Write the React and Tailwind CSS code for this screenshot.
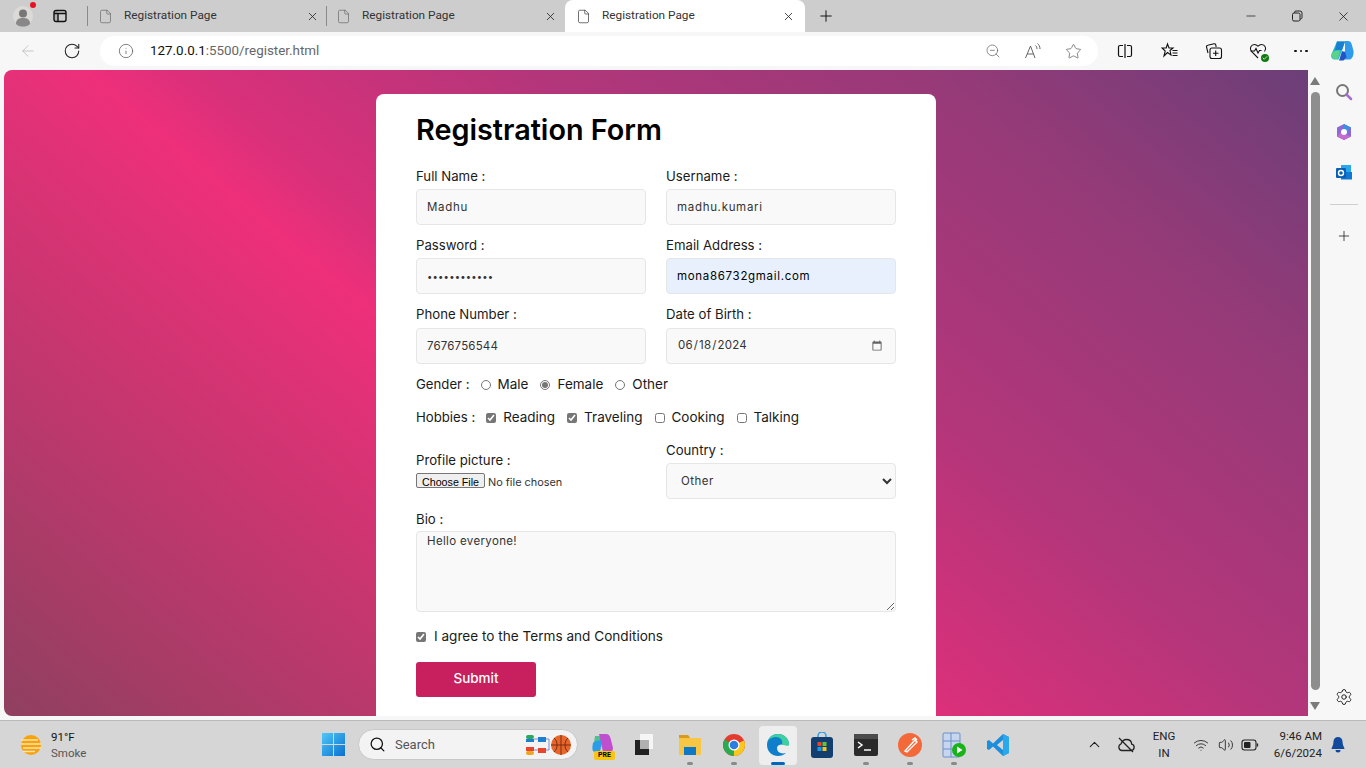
import React from "react";
import { ArrowLeft, RotateCw, Info, ZoomOut, Star, X, Plus, Minus, Search, Settings, ChevronUp, Wifi, Volume2, Bell, File, Check } from "lucide-react";

function Tab({ active, last }) {
  return (
    <div className={active ? "h-[32px] w-[240px] flex items-center bg-white rounded-t-[8px] pl-[11px] pr-[10px]" : "h-[32px] w-[239px] flex items-center pl-[10px] pr-[8px]"}>
      <File size={15} strokeWidth={1.1} className={active ? "text-[#333] shrink-0" : "text-[#666] shrink-0"} />
      <span className="ml-[11px] text-[11.8px] text-[#333] flex-1">Registration Page</span>
      <X size={13} strokeWidth={1.5} className="text-[#222] shrink-0" />
    </div>
  );
}

function TabBar() {
  return (
    <div className="h-[32px] bg-[#cdcdcd] flex items-center">
      <div className="w-[46px] h-full flex items-center justify-center pl-[0px]">
        <div className="relative w-[18px] h-[18px] mt-[1px]">
          <svg width="20" height="22" viewBox="0 0 20 22" className="ml-[-1px] mt-[-3px]">
            <circle cx="10" cy="11" r="10" fill="#dcdad6" />
            <circle cx="10" cy="8.5" r="4" fill="#777" />
            <path d="M3 19c0-5 3-6 7-6s7 1 7 6c-2 2-4 2.5-7 2.5S5 21 3 19z" fill="#888" />
          </svg>
          <span className="absolute right-[-4px] top-[-6px] w-[6px] h-[6px] rounded-full bg-[#e81123]" />
        </div>
      </div>
      <div className="w-[28px] flex justify-center">
        <svg width="14" height="14" viewBox="0 0 14 14" fill="none" stroke="#111" strokeWidth="1.4">
          <rect x="1" y="1.5" width="12" height="11" rx="2" />
          <path d="M1 4.5h12M5 4.5v8" />
          <rect x="1" y="1.5" width="4" height="11" fill="#111" stroke="none" opacity=".15" />
        </svg>
      </div>
      <div className="w-[13px]" />
      <div className="w-px h-[20px] bg-[#8a8a8a]" />
      <Tab />
      <div className="w-px h-[20px] bg-[#8a8a8a] ml-[-1px]" />
      <div className="ml-[-1px]"><Tab /></div>
      <Tab active />
      <div className="w-[42px] flex justify-center">
        <Plus size={18} strokeWidth={1.3} className="text-[#111]" />
      </div>
      <div className="flex-1" />
      <div className="flex items-center text-[#111]">
        <div className="w-[46px] flex justify-center"><Minus size={14} strokeWidth={1.2} /></div>
        <div className="w-[46px] flex justify-center">
          <svg width="12" height="12" viewBox="0 0 12 12" fill="none" stroke="#222" strokeWidth="1">
            <rect x="1.5" y="3" width="7.5" height="8" rx="1.5" />
            <path d="M3.5 3V2.5A1.5 1.5 0 0 1 5 1h4a2 2 0 0 1 2 2v4.5A1.5 1.5 0 0 1 9 9" />
          </svg>
        </div>
        <div className="w-[46px] flex justify-center pl-[1px]"><X size={15} strokeWidth={1.2} /></div>
      </div>
    </div>
  );
}

function CopilotLogo() {
  return (
    <svg width="24" height="24" viewBox="0 0 24 24">
      <path d="M7 2.5h8l-3 9-3.5 9H5C2 20.5 0.5 18 1.500 15z" fill="#22b8c8" />
      <path d="M7 2.500h8L12 11H5z" fill="#1a7fd0" />
      <path d="M15 2h3c2 0 3 1 3.800 3.500L23.500 12c.5 3-1 8.500-4 8.500H12l3-9z" fill="#2f9bec" />
      <path d="M9 21.500 12 12l3 1 1.500 5-3 3.500z" fill="#2453c9" />
      <path d="M2 14c2-2 5-3 8-2l-2 8H5c-2 0-3.500-2-3-6z" fill="#5bd28a" />
    </svg>
  );
}

function Toolbar() {
  return (
    <div className="h-[38px] bg-[#f7f7f7] flex items-center">
      <div className="w-[56px] flex justify-center"><ArrowLeft size={18} strokeWidth={1} className="text-[#b5b5b5]" /></div>
      <div className="w-[32px] flex justify-center"><RotateCw size={18} strokeWidth={1.4} className="text-[#222]" /></div>
      <div className="w-[12px]" />
      <div className="w-[998px] h-[30px] rounded-full bg-white flex items-center">
        <Info size={16} strokeWidth={1.1} className="ml-[18px] text-[#555]" />
        <div className="ml-[16px] text-[13.4px] flex-1">
          <span className="text-[#111]">127.0.0.1</span><span className="text-[#666]">:5500/register.html</span>
        </div>
        <div className="w-[40px] flex justify-center"><ZoomOut size={16} strokeWidth={1.1} className="text-[#666]" /></div>
        <div className="w-[40px] flex justify-center">
          <svg width="18" height="18" viewBox="0 0 18 18" fill="none" stroke="#666" strokeWidth="1">
            <path d="M1.500 16 6.500 4l4.500 12M3.200 12h6.500M11.500 3.500c1 .8 1.500 2 1.500 3.500M13.500 1.500c1.500 1.300 2.500 3 2.500 5.500" />
          </svg>
        </div>
        <div className="w-[40px] flex justify-center"><Star size={17} strokeWidth={1.1} className="text-[#666]" /></div>
        <div className="w-[5px]" />
      </div>
      <div className="w-[4px]" />
      <div className="w-[46px] flex justify-center">
        <svg width="16" height="16" viewBox="0 0 16 16" fill="none" stroke="#111" strokeWidth="1.2">
          <path d="M6 2.500H3A1.500 1.500 0 0 0 1.500 4v8A1.500 1.500 0 0 0 3 13.500h3M10 2.500h3A1.500 1.500 0 0 1 14.500 4v8a1.500 1.500 0 0 1-1.500 1.500h-3M8 1v14" />
        </svg>
      </div>
      <div className="w-[44px] flex justify-center">
        <svg width="18" height="18" viewBox="0 0 18 18" fill="none" stroke="#111" strokeWidth="1.1">
          <path d="M6.500 2 8 6h4L9 8.500l1 4.500-3.500-2.500L3 14l1.200-5L1 6h4.200zM11.500 8.500H16.500M11.500 11H16.500M11.500 13.500H16.500" />
        </svg>
      </div>
      <div className="w-[44px] flex justify-center">
        <svg width="18" height="18" viewBox="0 0 18 18" fill="none" stroke="#111" strokeWidth="1.1">
          <path d="M3 11 1.500 5A1.500 1.500 0 0 1 2.800 3.200L9 1.800a1.500 1.500 0 0 1 1.800 1.200l.3 2" />
          <rect x="5" y="6" width="11.500" height="10.500" rx="2" />
          <path d="M10.700 8.500v5.500M8 11.200h5.500" />
        </svg>
      </div>
      <div className="w-[44px] flex justify-center">
        <div className="relative w-[18px] h-[18px]">
          <svg width="18" height="18" viewBox="0 0 18 18" fill="none" stroke="#111" strokeWidth="1.1">
            <path d="M9 16 2.500 9.500C0 6.500 2 2.500 5.500 2.500 7 2.500 8 3.200 9 4.200c1-1 2-1.700 3.500-1.700C16 2.500 18 6.500 15.500 9.500" />
            <path d="M1.500 9h4l1.500-2.500 2 4.500 1.500-2.500h2" />
          </svg>
          <span className="absolute right-[-2px] bottom-[-2px] w-[8px] h-[8px] rounded-full bg-[#107c10] flex items-center justify-center">
            <Check size={6} strokeWidth={3} className="text-white" />
          </span>
        </div>
      </div>
      <div className="w-[42px] flex justify-center gap-[3px]">
        <span className="w-[2.500px] h-[2.500px] rounded-full bg-[#111]" />
        <span className="w-[2.500px] h-[2.500px] rounded-full bg-[#111]" />
        <span className="w-[2.500px] h-[2.500px] rounded-full bg-[#111]" />
      </div>
      <div className="w-[40px] flex justify-center"><CopilotLogo /></div>
    </div>
  );
}

const inputCls = "w-full h-[36px] rounded-[4px] border border-[#e6e6e6] bg-[#f9f9f9] px-[10px] text-[11.5px] text-[#333] tracking-[0.06em] outline-none";
const numCls = "w-full h-[36px] rounded-[4px] border border-[#e6e6e6] bg-[#f9f9f9] px-[10px] text-[11.5px] text-[#333] tracking-[0.015em] outline-none";

function Field({ label, children, className = "" }) {
  return (
    <div className={"flex flex-col gap-[2px] " + className}>
      <label className="h-[21px] leading-[21px] text-[13.2px] text-[#1a1a1a]">{label}</label>
      {children}
    </div>
  );
}

function Choice({ type, label, checked, gap = "ml-[7px]" }) {
  return (
    <label className="flex items-center">
      <input type={type} name={type === "radio" ? "gender" : undefined} defaultChecked={checked} className="w-[10px] h-[10px] m-0 accent-[#767676]" />
      <span className={gap + " text-[13.5px] text-[#1a1a1a]"}>{label}</span>
    </label>
  );
}

function Form() {
  return (
    <div className="w-[560px] h-[640px] mt-[24px] shrink-0 bg-white rounded-t-[8px] px-[40px] pt-[17px] font-['Inter',sans-serif]">
      <h1 className="h-[38px] leading-[38px] text-[28.8px] font-semibold text-black">Registration Form</h1>
      <div className="grid grid-cols-2 gap-x-[20px] mt-[17px]">
        <Field label="Full Name :" className="mb-[10px]"><input className={inputCls} defaultValue="Madhu" /></Field>
        <Field label="Username :" className="mb-[10px]"><input className={inputCls} defaultValue="madhu.kumari" /></Field>
        <Field label="Password :" className="mb-[10px]"><input type="password" className={inputCls + " !text-[9.5px] !tracking-[0.02em]"} defaultValue="madhu1234567" /></Field>
        <Field label="Email Address :" className="mb-[10px]"><input className={inputCls + " !bg-[#e8f0fe] !text-black"} defaultValue="mona86732gmail.com" /></Field>
        <Field label="Phone Number :" className="gap-[3px]"><input className={numCls} defaultValue="7676756544" /></Field>
        <Field label="Date of Birth :" className="gap-[3px]"><input type="date" className={numCls + " [&::-webkit-calendar-picker-indicator]:opacity-60 [&::-webkit-calendar-picker-indicator]:w-[12px] [&::-webkit-calendar-picker-indicator]:h-[12px]"} defaultValue="2024-06-18" /></Field>
      </div>
      <div className="flex items-center h-[21px] mt-[10px] text-[13.2px] text-[#1a1a1a]">
        <span className="mr-[11px]">Gender :</span>
        <Choice type="radio" label="Male" />
        <span className="w-[12px]" />
        <Choice type="radio" label="Female" checked />
        <span className="w-[12px]" />
        <Choice type="radio" label="Other" />
      </div>
      <div className="flex items-center h-[21px] mt-[12px] text-[13.2px] text-[#1a1a1a]">
        <span className="mr-[11px]">Hobbies :</span>
        <Choice type="checkbox" label="Reading" checked />
        <span className="w-[12px]" />
        <Choice type="checkbox" label="Traveling" checked />
        <span className="w-[12px]" />
        <Choice type="checkbox" label="Cooking" />
        <span className="w-[12px]" />
        <Choice type="checkbox" label="Talking" />
      </div>
      <div className="grid grid-cols-2 gap-x-[20px] mt-[12px]">
        <div className="flex flex-col justify-center">
          <label className="h-[21px] leading-[21px] text-[13.2px] text-[#1a1a1a] mt-[1px]">Profile picture :</label>
          <input type="file" className="text-[10.9px] text-[#333] h-[20px] mt-[-1px] file:h-[15px] file:bg-[#efefef] file:border file:border-[#767676] file:rounded-[2px] file:px-[5px] file:mr-[3px] file:mt-[2.500px] file:text-[10.7px] file:text-black file:font-['Liberation_Sans']" />
        </div>
        <Field label="Country :">
          <select defaultValue="Other" className={inputCls + " !tracking-[0.04em]"}>
            <option>India</option>
            <option>Other</option>
          </select>
        </Field>
      </div>
      <Field label="Bio :" className="!gap-[1px] mt-[10px]">
        <textarea className={inputCls + " !h-[81px] block leading-[18px] !tracking-[0.03em]"} defaultValue="Hello everyone!" />
      </Field>
      <label className="flex items-center h-[21px] mt-[14px]">
        <input type="checkbox" defaultChecked className="w-[10px] h-[10px] accent-[#767676]" />
        <span className="ml-[8px] text-[13.6px] text-[#1a1a1a]">I agree to the Terms and Conditions</span>
      </label>
      <button className="block mt-[15px] w-[120px] h-[35px] pb-[2px] rounded-[3px] bg-[#c81f5e] text-white text-[13.5px] font-medium">Submit</button>
    </div>
  );
}

function Scrollbar() {
  return (
    <div className="w-[14px] h-full bg-[#f7f7f7] flex flex-col items-center">
      <div className="mt-[7px] w-0 h-0 border-x-[5px] border-x-transparent border-b-[8px] border-b-[#7a7a7a]" />
      <div className="mt-[7px] w-[9px] flex-1 rounded-full bg-[#8e8e8e]" />
      <div className="mt-[12px] mb-[6px] w-0 h-0 border-x-[5px] border-x-transparent border-t-[8px] border-t-[#7a7a7a]" />
    </div>
  );
}

function Sidebar() {
  return (
    <div className="w-[44px] h-full bg-[#f7f7f7] flex flex-col items-center">
      <div className="h-[43px] flex items-center">
        <svg width="18" height="18" viewBox="0 0 18 18" fill="none">
          <circle cx="7.500" cy="7.500" r="5.500" stroke="#777" strokeWidth="2" />
          <path d="M11.500 11.500 16 16" stroke="#a86bd1" strokeWidth="2.500" strokeLinecap="round" />
        </svg>
      </div>
      <div className="h-[38px] flex items-center">
        <svg width="18" height="18" viewBox="0 0 18 18">
          <path d="M9 1 16 4.500v9L9 17l-7-3.500v-9z" fill="#8a6ad8" />
          <path d="M9 1 16 4.500 12 9 9 6z" fill="#3f8fe0" />
          <path d="M2 13.500 6 9l3 3 3 0 4 1.500L9 17z" fill="#c66bd0" />
          <circle cx="9" cy="9" r="3" fill="#fff" />
        </svg>
      </div>
      <div className="h-[42px] flex items-center">
        <svg width="18" height="18" viewBox="0 0 18 18">
          <path d="M6 2h10v14H6z" fill="#28a8ea" />
          <path d="M6 9h11v7.500H6z" fill="#0f78d4" />
          <rect x="1" y="5" width="10" height="10" rx="1" fill="#0a5fb4" />
          <circle cx="6" cy="10" r="2.500" fill="none" stroke="#fff" strokeWidth="1.400" />
        </svg>
      </div>
      <div className="w-[28px] h-px bg-[#cfcfcf] mt-[11px]" />
      <div className="h-[62px] flex items-center"><Plus size={16} strokeWidth={1.200} className="text-[#222]" /></div>
      <div className="flex-1" />
      <div className="h-[36px] mb-[1px] flex items-center"><Settings size={18} strokeWidth={1.300} className="text-[#222]" /></div>
    </div>
  );
}

function Slot({ children, dot, active }) {
  return (
    <div className={"relative w-[44px] h-[48px] flex items-center justify-center"}>
      {active && <div className="absolute left-[3px] top-[5px] w-[38px] h-[39px] rounded-[4px] bg-[#eeeeee]" />}
      <div className="relative">{children}</div>
      {dot && <span className="absolute left-[19px] bottom-[4px] w-[6px] h-[3px] rounded-full bg-[#8a8a8a]" />}
      {active && <span className="absolute left-[15px] bottom-[4px] w-[14px] h-[3px] rounded-full bg-[#0067c0]" />}
    </div>
  );
}

function Taskbar() {
  return (
    <div className="h-[48px] bg-[#d6d6d6] border-t border-[#b9b9b9] flex items-center">
      <div className="w-[20px]" />
      <svg width="22" height="22" viewBox="0 0 22 22">
        <circle cx="11" cy="11" r="10" fill="#f7a20b" />
        <path d="M1 6h17M1 10h20M3 14h18M3 17.500h12" stroke="#fde3b0" strokeWidth="1.400" />
      </svg>
      <div className="ml-[9px] w-[60px] text-[11.500px] leading-[16px]">
        <div className="text-[#111]">91°F</div>
        <div className="text-[#555]">Smoke</div>
      </div>
      <div className="w-[211px]" />
      <svg width="23" height="23" viewBox="0 0 23 23">
        <defs>
          <linearGradient id="w" x1="0" y1="0" x2="1" y2="1">
            <stop offset="0" stopColor="#4fc8f8" />
            <stop offset="1" stopColor="#0a6fd0" />
          </linearGradient>
        </defs>
        <path d="M0 0h11v11H0zM12 0h11v11H12zM0 12h11v11H0zM12 12h11v11H12z" fill="url(#w)" />
      </svg>
      <div className="w-[13px]" />
      <div className="w-[220px] h-[31px] rounded-full bg-[#f3f3f3] border border-[#c8c8c8] flex items-center">
        <Search size={17} strokeWidth={1.800} className="ml-[10px] text-[#111]" />
        <span className="ml-[9px] text-[13px] text-[#555] flex-1">Search</span>
        <svg width="46" height="24" viewBox="0 0 46 24" className="mr-[5px]">
          <rect x="0" y="2" width="8" height="4" rx="2" fill="#2aa85c" />
          <rect x="0" y="6" width="8" height="3" fill="#1c7fd0" />
          <rect x="12" y="4" width="8" height="5" fill="#1c7fd0" />
          <rect x="0" y="14" width="8" height="4" fill="#e8452c" />
          <rect x="0" y="18" width="8" height="4" rx="2" fill="#f0a41f" />
          <rect x="12" y="15" width="8" height="5" fill="#e8452c" />
          <path d="M8 6h4M8 17h4M20 6h3v11h-3" stroke="#7d8fd0" strokeWidth="1" fill="none" />
          <circle cx="35" cy="12" r="10" fill="#e8662a" />
          <path d="M25 12h20M35 2v20M28 5c4 3 4 11 0 14M42 5c-4 3-4 11 0 14" stroke="#7a2e12" strokeWidth="1" fill="none" />
        </svg>
      </div>
      <div className="w-[2px]" />
      <Slot>
        <div className="relative">
          <svg width="24" height="24" viewBox="0 0 24 24">
            <path d="M5 3h7l-3 14H3z" fill="#4cc38a" />
            <path d="M9 1h7c3 0 4 2 5 6l2 8c0 3-2 4-4 4h-6z" fill="#c04fd0" />
            <path d="M3 10c3-3 7-3 9-1l-2 10H5c-3 0-3-4-2-9z" fill="#2a9ce8" />
          </svg>
          <span className="absolute left-[4px] bottom-[-3px] w-[21px] h-[9px] rounded-[2px] bg-[#f8c512] text-[7px] leading-[9px] font-bold text-black text-center">PRE</span>
        </div>
      </Slot>
      <Slot>
        <svg width="22" height="24" viewBox="0 0 22 24" className="ml-[-4px]">
          <rect x="7" y="1" width="13" height="15" fill="#f6f6f6" />
          <rect x="2" y="7" width="14" height="15" fill="#222" />
          <path d="M7 7h9v9H7z" fill="#b0b0b0" />
        </svg>
      </Slot>
      <Slot dot>
        <svg width="24" height="24" viewBox="0 0 24 24">
          <path d="M1 2h9l2 3h11v17H1z" fill="#f6c644" />
          <path d="M1 2h9l2 3H1z" fill="#d99a1c" />
          <rect x="6" y="14" width="12" height="8" fill="#0d78c8" />
        </svg>
      </Slot>
      <Slot dot>
        <svg width="24" height="24" viewBox="0 0 24 24">
          <circle cx="12" cy="12" r="11" fill="#e33b2e" />
          <path d="M12 12 22 7.500A11 11 0 0 1 12 23z" fill="#f8c81c" />
          <path d="M12 12 12 23A11 11 0 0 1 2.500 6.500z" fill="#2da94f" />
          <circle cx="12" cy="12" r="5.500" fill="#fff" />
          <circle cx="12" cy="12" r="4.300" fill="#2d7de0" />
        </svg>
      </Slot>
      <Slot active>
        <svg width="24" height="24" viewBox="0 0 24 24">
          <path d="M23 12C23 5 18 1 12 1 6 1 1 5.500 1 12c0 6.500 5 11 11 11 3 0 6-1 8-3-5 1.500-9-1-9-5 0-2 2-3.500 5-3.500 3 0 7 1 7-.5z" fill="#0f7fcc" />
          <path d="M23 12C23 5 18 1 12 1 7 1 3 4 2 8c2-3 5-4 8-4 5 0 7 4 6 7.500 3 1 7 2 7 .5z" fill="#3fd0a0" />
        </svg>
      </Slot>
      <Slot>
        <svg width="24" height="26" viewBox="0 0 24 26">
          <path d="M8 6V4a4 4 0 0 1 8 0v2" stroke="#2aa0e0" strokeWidth="1.500" fill="none" />
          <rect x="1" y="5" width="22" height="21" rx="3" fill="#123e70" />
          <rect x="7.500" y="10" width="4" height="4" fill="#e8452c" />
          <rect x="12.500" y="10" width="4" height="4" fill="#6cbf3c" />
          <rect x="7.500" y="15" width="4" height="4" fill="#1c9ae8" />
          <rect x="12.500" y="15" width="4" height="4" fill="#f8c512" />
        </svg>
      </Slot>
      <Slot dot>
        <svg width="24" height="22" viewBox="0 0 24 22">
          <rect x="0" y="0" width="24" height="22" rx="2" fill="#2b2b2b" />
          <rect x="0" y="0" width="24" height="5" fill="#4b4b4b" />
          <path d="M4 8l4 3-4 3" stroke="#fff" strokeWidth="1.500" fill="none" />
          <path d="M10 16h7" stroke="#fff" strokeWidth="1.500" />
        </svg>
      </Slot>
      <Slot dot>
        <svg width="24" height="24" viewBox="0 0 24 24">
          <circle cx="12" cy="12" r="12" fill="#f4693a" />
          <path d="M7 18 17 7l2 2-10 10zM14 7l3-2 2 2" stroke="#fff" strokeWidth="1.400" fill="none" />
        </svg>
      </Slot>
      <Slot dot>
        <svg width="24" height="26" viewBox="0 0 24 26">
          <rect x="1" y="1" width="17" height="24" rx="1" fill="#c6d6ee" stroke="#6d8fc9" />
          <path d="M1 9h17M1 17h17M9 1v24" stroke="#6d8fc9" />
          <circle cx="17" cy="18" r="7" fill="#17b317" />
          <path d="M15 14.500 20.500 18 15 21.500z" fill="#fff" />
        </svg>
      </Slot>
      <Slot>
        <svg width="24" height="24" viewBox="0 0 24 24">
          <path d="M17 1 23 4v16l-6 3L7 13.500 3 17l-2-1V8l2-1 4 3.500z" fill="#1b8fdc" />
          <path d="M17 1 23 4v16l-6 3zM17 7l-6 5 6 5z" fill="#29a9ec" />
          <path d="M17 7 11 12l6 5z" fill="#d6d6d6" />
        </svg>
      </Slot>
      <div className="flex-1" />
      <div className="w-[32px] flex justify-center"><ChevronUp size={17} strokeWidth={1.500} className="text-[#222]" /></div>
      <div className="w-[32px] flex justify-center">
        <svg width="18" height="18" viewBox="0 0 18 18" fill="none" stroke="#222" strokeWidth="1.300">
          <path d="M5 14.500A3.500 3.500 0 0 1 4 7.800C5 5 7 3.500 9.500 3.500c3 0 5 2 5.200 4.700A3.200 3.200 0 0 1 14 14.500zM2 2l14 14" />
        </svg>
      </div>
      <div className="w-[44px] mt-[1px] text-center text-[11.500px] leading-[17px] text-[#222]">
        <div>ENG</div>
        <div>IN</div>
      </div>
      <div className="w-[30px] flex justify-center"><Wifi size={16} strokeWidth={1.300} className="text-[#222]" /></div>
      <div className="w-[20px] flex justify-center"><Volume2 size={16} strokeWidth={1.300} className="text-[#222]" /></div>
      <div className="w-[28px] flex justify-center">
        <svg width="18" height="12" viewBox="0 0 18 12" fill="none">
          <rect x="1" y="1" width="14" height="10" rx="2.500" stroke="#222" strokeWidth="1.100" />
          <rect x="3" y="3" width="6.500" height="6" rx="1" fill="#222" />
          <path d="M16.500 4.500v3" stroke="#222" strokeWidth="1.300" />
        </svg>
      </div>
      <div className="w-[58px] text-right text-[11.500px] leading-[16.500px] text-[#222]">
        <div>9:46 AM</div>
        <div>6/6/2024</div>
      </div>
      <div className="w-[32px] flex justify-center">
        <svg width="16" height="17" viewBox="0 0 16 17" fill="#114a9c">
          <path d="M8 1a4.500 4.500 0 0 0-4.500 4.500c0 4-2 6-2 7.500h13c0-1.500-2-3.500-2-7.500A4.500 4.500 0 0 0 8 1z" />
          <path d="M5.500 14a2.500 2.500 0 0 0 5 0z" />
        </svg>
      </div>
      <div className="w-[12px]" />
    </div>
  );
}

export default function App() {
  return (
    <div className="w-[1366px] h-[768px] overflow-hidden flex flex-col bg-[#f7f7f7] font-['Roboto',sans-serif]">
      <TabBar />
      <Toolbar />
      <div className="h-[646px] flex pl-[4px]">
        <div className="w-[1304px] h-full overflow-hidden rounded-tl-[8px] rounded-bl-[8px] flex justify-center bg-[linear-gradient(40deg,#8f4060_0%,#ee2f7a_41%,#da307a_46%,#b2367a_63%,#963a78_82%,#6b3f78_100%)]">
          <Form />
        </div>
        <Scrollbar />
        <Sidebar />
      </div>
      <div className="h-[4px]" />
      <Taskbar />
    </div>
  );
}
